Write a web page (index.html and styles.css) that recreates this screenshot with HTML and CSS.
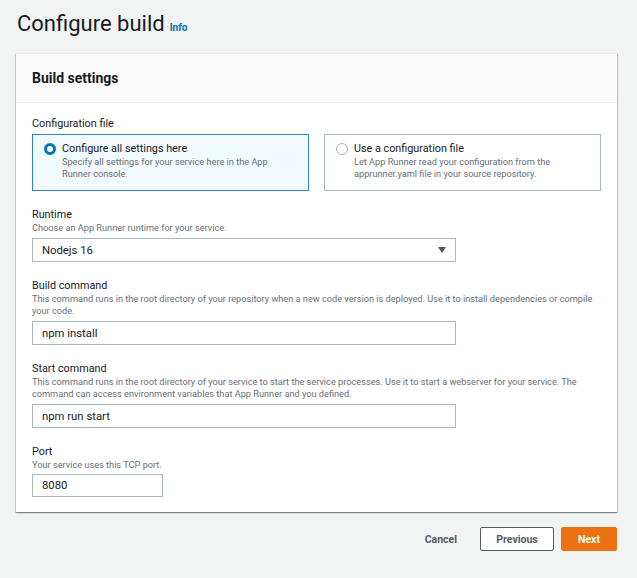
FILE: index.html
```html
<!DOCTYPE html>
<html lang="en">
<head>
<meta charset="utf-8">
<title>Configure build</title>
<link rel="stylesheet" href="styles.css">
</head>
<body>
<div class="page">
  <div class="title-row">
    <h1 class="title">Configure build</h1>
    <a class="info">Info</a>
  </div>

  <section class="card">
    <header class="card-header">
      <h2 class="card-title">Build settings</h2>
    </header>
    <div class="card-body">
      <div class="field">
        <div class="label">Configuration file</div>
        <div class="tiles">
          <div class="tile selected">
            <span class="radio checked"></span>
            <div class="tile-text">
              <div class="tile-title">Configure all settings here</div>
              <div class="tile-desc">Specify all settings for your service here in the App<br>Runner console.</div>
            </div>
          </div>
          <div class="tile">
            <span class="radio"></span>
            <div class="tile-text">
              <div class="tile-title">Use a configuration file</div>
              <div class="tile-desc">Let App Runner read your configuration from the<br>apprunner.yaml file in your source repository.</div>
            </div>
          </div>
        </div>
      </div>

      <div class="field">
        <div class="label">Runtime</div>
        <div class="desc">Choose an App Runner runtime for your service.</div>
        <div class="control select wide">
          <span>Nodejs 16</span>
          <span class="caret"></span>
        </div>
      </div>

      <div class="field">
        <div class="label">Build command</div>
        <div class="desc">This command runs in the root directory of your repository when a new code version is deployed. Use it to install dependencies or compile<br>your code.</div>
        <div class="control wide">npm install</div>
      </div>

      <div class="field">
        <div class="label">Start command</div>
        <div class="desc">This command runs in the root directory of your service to start the service processes. Use it to start a webserver for your service. The<br>command can access environment variables that App Runner and you defined.</div>
        <div class="control wide">npm run start</div>
      </div>

      <div class="field">
        <div class="label">Port</div>
        <div class="desc">Your service uses this TCP port.</div>
        <div class="control narrow">8080</div>
      </div>
    </div>
  </section>

  <div class="actions">
    <button class="btn link">Cancel</button>
    <button class="btn normal">Previous</button>
    <button class="btn primary">Next</button>
  </div>
</div>
</body>
</html>
```

FILE: styles.css
```css
* { box-sizing: border-box; }

html, body {
  margin: 0;
  padding: 0;
  background: #f2f3f3;
}

body {
  font-family: Roboto, "Liberation Sans", sans-serif;
  color: #16191f;
}

.page {
  padding: 0 20px 0 16px;
}

.title-row {
  display: flex;
  align-items: baseline;
  gap: 5px;
  padding: 9px 0 0 1px;
  height: 53px;
}

.title {
  margin: 0;
  font-size: 22px;
  line-height: 30px;
  font-weight: 400;
}

.info {
  color: #0073bb;
  font-size: 10px;
  font-weight: 700;
}

.card {
  background: #fff;
  box-shadow: 0 1px 1px 0 rgba(0, 28, 36, 0.3), 1px 1px 1px 0 rgba(0, 28, 36, 0.15), -1px 1px 1px 0 rgba(0, 28, 36, 0.15);
  border-top: 1px solid #eaeded;
}

.card-header {
  height: 49px;
  background: #fafafa;
  border-bottom: 1px solid #eaeded;
  display: flex;
  align-items: center;
  padding: 0 16px;
}

.card-title {
  margin: 0;
  font-size: 14px;
  font-weight: 700;
}

.card-body {
  padding: 14px 16px 15px 16px;
  display: flex;
  flex-direction: column;
  gap: 17px;
}

.label {
  font-size: 10.8px;
  line-height: 14px;
}

.desc {
  font-size: 9.2px;
  line-height: 12px;
  color: #687078;
  white-space: nowrap;
}

.tiles {
  margin-top: 3px;
  display: flex;
  gap: 15px;
}

.tile {
  flex: 1;
  height: 57px;
  border: 1px solid #aab7b8;
  background: #fff;
  display: flex;
  align-items: flex-start;
  gap: 6px;
  padding: 7px 12px 9px 11px;
}

.tile.selected {
  background: #f1faff;
  border-color: #2e86c1;
}

.radio {
  flex: none;
  width: 12px;
  height: 12px;
  margin-top: 1px;
  border-radius: 50%;
  border: 1px solid #aab7b8;
  background: #fff;
}

.radio.checked {
  border: 3.5px solid #0073bb;
}

.tile-title {
  font-size: 10.8px;
  line-height: 14px;
}

.tile-desc {
  font-size: 9.2px;
  line-height: 12px;
  color: #687078;
  white-space: nowrap;
}

.control {
  margin-top: 4px;
  height: 24px;
  border: 1px solid #aab7b8;
  background: #fff;
  font-size: 11.3px;
  display: flex;
  align-items: center;
  padding: 0 9px;
}

.control.wide { width: 424px; }
.control.narrow { width: 131px; height: 23px; margin-top: 3px; }

.select {
  justify-content: space-between;
  padding-right: 9px;
}

.caret {
  width: 0;
  height: 0;
  border-left: 4px solid transparent;
  border-right: 4px solid transparent;
  border-top: 6px solid #545b64;
}

.actions {
  display: flex;
  justify-content: flex-end;
  align-items: center;
  gap: 7px;
  margin-top: 15px;
}

.btn {
  font-family: inherit;
  font-size: 10.5px;
  font-weight: 700;
  height: 24px;
  border-radius: 2px;
  padding: 0 14px;
  cursor: pointer;
}

.btn.link {
  background: transparent;
  border: 1px solid transparent;
  color: #545b64;
  margin-right: 1px;
}

.btn.normal {
  background: #fff;
  border: 1px solid #545b64;
  color: #545b64;
  width: 74px;
}

.btn.primary {
  background: #ec7211;
  border: 1px solid #ec7211;
  color: #fff;
  width: 56px;
}
```
